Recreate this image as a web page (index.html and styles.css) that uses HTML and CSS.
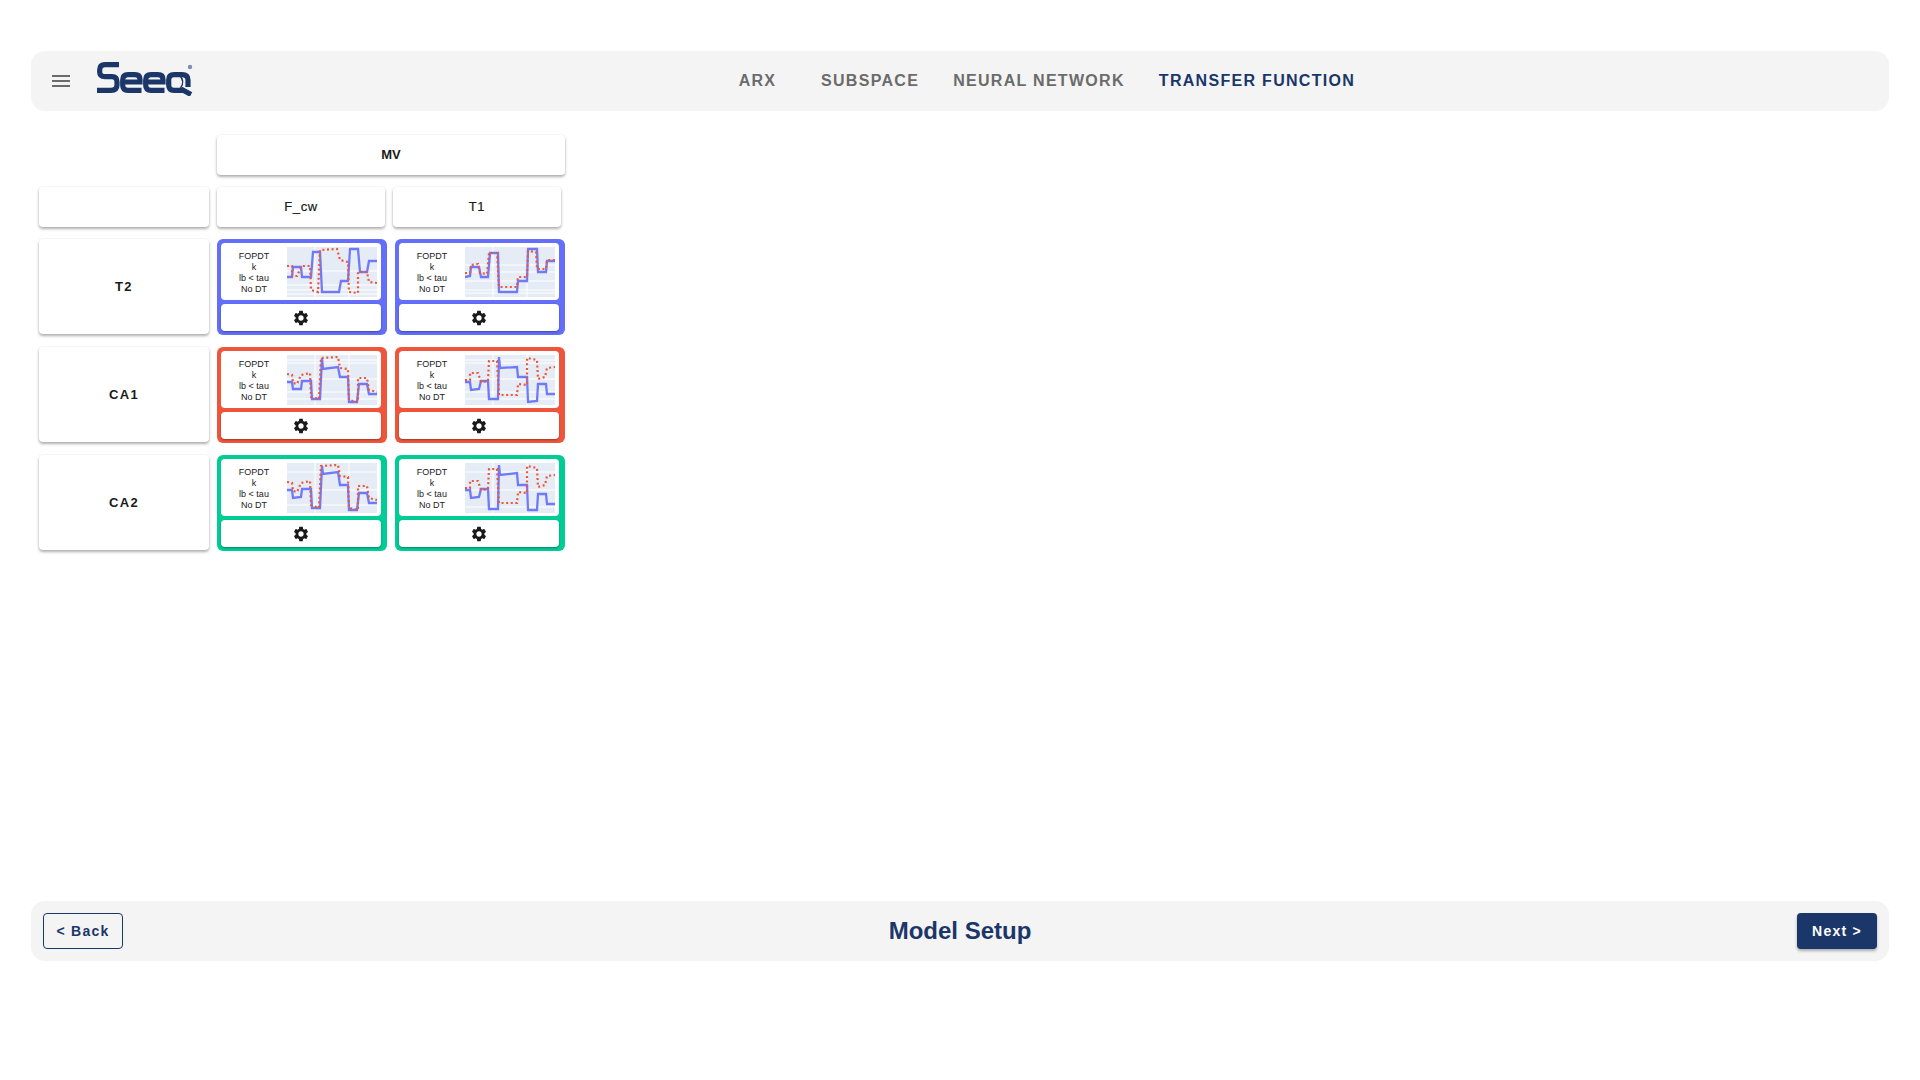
FILE: index.html
```html
<!DOCTYPE html>
<html lang="en">
<head>
<meta charset="utf-8">
<title>Model Setup</title>
<link rel="stylesheet" href="styles.css">
</head>
<body>
<svg class="defs" width="0" height="0" aria-hidden="true"><defs>
<symbol id="gear" viewBox="0 0 24 24"><path d="M19.14 12.94c.04-.3.06-.61.06-.94 0-.32-.02-.64-.07-.94l2.03-1.58c.18-.14.23-.41.12-.61l-1.92-3.32c-.12-.22-.37-.29-.59-.22l-2.39.96c-.5-.38-1.03-.7-1.62-.94l-.36-2.54c-.04-.24-.24-.41-.48-.41h-3.84c-.24 0-.43.17-.47.41l-.36 2.54c-.59.24-1.13.57-1.62.94l-2.39-.96c-.22-.08-.47 0-.59.22L2.74 8.87c-.12.21-.08.47.12.61l2.03 1.58c-.05.3-.09.63-.09.94s.02.64.07.94l-2.03 1.58c-.18.14-.23.41-.12.61l1.92 3.32c.12.22.37.29.59.22l2.39-.96c.5.38 1.03.7 1.62.94l.36 2.54c.05.24.24.41.48.41h3.84c.24 0 .44-.17.47-.41l.36-2.54c.59-.24 1.13-.56 1.62-.94l2.39.96c.22.08.47 0 .59-.22l1.92-3.32c.12-.22.07-.47-.12-.61l-2.01-1.58zM12 15.6c-1.98 0-3.6-1.62-3.6-3.6s1.62-3.6 3.6-3.6 3.6 1.62 3.6 3.6-1.62 3.6-3.6 3.6z"/></symbol>
</defs></svg>
<div class="page">
  <header class="bar top">
    <svg class="menu" viewBox="0 0 24 24"><path d="M3 18h18v-2H3v2zm0-5h18v-2H3v2zm0-7v2h18V6H3z"/></svg>
    <svg class="logo" viewBox="0 0 96 34">
      <g class="logo-s">
        <path d="M22 2.7H8Q2.7 2.7 2.7 8V10Q2.7 14.7 8 14.7H15Q20 14.7 20 20V23Q20 28.3 14 28.3H0"/>
        <path d="M25.7 20H43V17.5Q43 12.7 38 12.7H31Q25.7 12.7 25.7 18V23Q25.7 28.3 31 28.3H44.5"/>
        <path d="M48.7 20H66V17.5Q66 12.7 61 12.7H54Q48.7 12.7 48.7 18V23Q48.7 28.3 54 28.3H67.5"/>
        <path d="M86 28.3H77Q71.7 28.3 71.7 23V18Q71.7 12.7 77 12.7H85Q91 12.7 91 18V25"/>
        <path d="M84 27L94 32.5"/>
      </g>
      <path class="logo-c" d="M82 13Q89 19 83 27"/>
      <circle class="logo-r" cx="93" cy="5" r="2.2"/>
    </svg>
    <nav class="tabs">
      <span class="tab tab-arx">ARX</span>
      <span class="tab">SUBSPACE</span>
      <span class="tab">NEURAL NETWORK</span>
      <span class="tab active">TRANSFER FUNCTION</span>
    </nav>
  </header>

  <main class="main">
    <div class="matrix">
      <div class="blank"></div>
      <div class="card group">MV</div>

      <div class="card head">&nbsp;</div>
      <div class="card head narrow">F_cw</div>
      <div class="card head narrow shift">T1</div>

      <div class="card side">T2</div>
      <div class="cell blue">
        <div class="box info">
          <div class="desc">FOPDT<br>k<br>lb &lt; tau<br>No DT</div>
          <svg class="plot" viewBox="0 0 90 50"><rect class="plot-bg" width="90" height="50"/><path class="grid" d="M28 0V50M62 0V50M0 24H90M0 38H90M0 43H90M0 47H90"/><polyline class="ln-b" points="0,30 5,30 6,20 14,20 15,30 24,30 26,5 33,5 35,45 52,45 54,34 61,34 63,2 71,2 73,25 80,25 82,14 90,14"/><polyline class="ln-r" points="0,19 5,19 5,29 10,29 14,20 15,19 23,19 24,43 31,45 33,3 50,2 53,13 61,15 62,45 71,46 71,25 80,25 82,35 90,36"/></svg>
        </div>
        <div class="box tool"><svg class="gear"><use href="#gear"/></svg></div>
      </div>
      <div class="cell blue">
        <div class="box info">
          <div class="desc">FOPDT<br>k<br>lb &lt; tau<br>No DT</div>
          <svg class="plot" viewBox="0 0 90 50"><rect class="plot-bg" width="90" height="50"/><path class="grid" d="M28 0V50M62 0V50M0 18H90M0 25H90M0 34H90M0 43H90M0 46H90"/><polyline class="ln-b" points="0,30 5,29 6,20 14,20 16,30 23,30 25,6 33,6 34,45 52,45 53,34 62,34 63,2 72,2 73,25 81,25 82,14 90,14"/><polyline class="ln-r" points="0,26 5,26 6,18 13,17 15,26 22,27 24,6 32,6 34,40 52,40 53,30 62,30 63,4 71,5 72,22 81,22 82,13 90,13"/></svg>
        </div>
        <div class="box tool"><svg class="gear"><use href="#gear"/></svg></div>
      </div>

      <div class="card side">CA1</div>
      <div class="cell red">
        <div class="box info">
          <div class="desc">FOPDT<br>k<br>lb &lt; tau<br>No DT</div>
          <svg class="plot" viewBox="0 0 90 50"><rect class="plot-bg" width="90" height="50"/><path class="grid" d="M28 0V50M62 0V50M0 5H90M0 8H90M0 24H90M0 37H90M0 44H90"/><polyline class="ln-b" points="0,27 5,27 6,34 14,34 15,26 24,26 25,44 33,44 35,3 36,14 51,12 53,22 61,22 62,47 70,47 72,29 80,29 82,39 90,39"/><polyline class="ln-r" points="0,19 5,20 6,28 10,29 14,20 23,18 24,42 32,44 34,3 51,2 53,13 61,14 62,45 71,47 71,23 80,23 82,35 90,37"/></svg>
        </div>
        <div class="box tool"><svg class="gear"><use href="#gear"/></svg></div>
      </div>
      <div class="cell red">
        <div class="box info">
          <div class="desc">FOPDT<br>k<br>lb &lt; tau<br>No DT</div>
          <svg class="plot" viewBox="0 0 90 50"><rect class="plot-bg" width="90" height="50"/><path class="grid" d="M28 0V50M62 0V50M0 5H90M0 8H90M0 24H90M0 37H90M0 44H90"/><polyline class="ln-b" points="0,27 5,27 6,35 14,34 16,26 23,26 24,44 33,44 34,2 35,13 52,12 53,22 62,22 63,47 72,46 73,29 81,29 82,39 90,39"/><polyline class="ln-r" points="0,25 5,25 5,18 13,18 16,27 23,26 24,6 32,6 34,40 52,40 53,29 62,30 62,3 72,5 73,24 80,22 82,13 90,12"/></svg>
        </div>
        <div class="box tool"><svg class="gear"><use href="#gear"/></svg></div>
      </div>

      <div class="card side">CA2</div>
      <div class="cell green">
        <div class="box info">
          <div class="desc">FOPDT<br>k<br>lb &lt; tau<br>No DT</div>
          <svg class="plot" viewBox="0 0 90 50"><rect class="plot-bg" width="90" height="50"/><path class="grid" d="M28 0V50M62 0V50M0 9H90M0 27H90M0 42H90"/><polyline class="ln-b" points="0,27 5,27 6,35 14,34 15,26 24,26 25,45 33,45 35,3 36,11 51,9 53,22 61,22 62,47 70,47 72,30 80,30 82,40 90,40"/><polyline class="ln-r" points="0,19 5,20 6,28 10,29 14,20 23,18 24,42 32,45 34,3 51,2 53,13 61,14 62,45 71,47 71,23 80,23 82,35 90,37"/></svg>
        </div>
        <div class="box tool"><svg class="gear"><use href="#gear"/></svg></div>
      </div>
      <div class="cell green">
        <div class="box info">
          <div class="desc">FOPDT<br>k<br>lb &lt; tau<br>No DT</div>
          <svg class="plot" viewBox="0 0 90 50"><rect class="plot-bg" width="90" height="50"/><path class="grid" d="M28 0V50M62 0V50M0 9H90M0 27H90M0 44H90"/><polyline class="ln-b" points="0,27 5,27 6,35 14,34 16,26 23,26 24,46 33,46 34,2 35,12 52,10 53,22 62,22 63,47 72,47 73,31 81,31 82,41 90,41"/><polyline class="ln-r" points="0,25 5,25 5,18 13,18 16,27 23,26 24,6 32,6 34,40 52,40 53,29 62,30 62,3 72,5 73,24 80,22 82,13 90,12"/></svg>
        </div>
        <div class="box tool"><svg class="gear"><use href="#gear"/></svg></div>
      </div>
    </div>
  </main>

  <footer class="bar bottom">
    <button class="btn back">&lt; Back</button>
    <h1 class="title">Model Setup</h1>
    <button class="btn next">Next &gt;</button>
  </footer>
</div>
</body>
</html>
```
FILE: styles.css
```css
* { box-sizing: border-box; }
html, body { margin: 0; padding: 0; background: #fff; }
body { font-family: "Liberation Sans", Arial, sans-serif; color: #1a1a1a; }
.defs { position: absolute; }
.page { height: 1080px; padding: 51px 31px 0; overflow: hidden; }
.bar { background: #f4f4f4; border-radius: 14px; height: 60px; display: flex; align-items: center; }
.top { padding-left: 18px; }
.menu { width: 24px; height: 24px; fill: #6b6b6b; flex: none; }
.logo { width: 96px; height: 34px; margin-left: 24px; margin-top: -4px; flex: none; }
.logo-s path { fill: none; stroke: #1b3668; stroke-width: 5.2; }
.logo-c { fill: none; stroke: #1b3668; stroke-width: 1.4; }
.logo-r { fill: #7d8fb0; }
.tabs { display: flex; gap: 2px; margin-left: 519px; }
.tab { padding: 0 16px; font-size: 16px; font-weight: 700; letter-spacing: 1.3px; color: #6b6b6b; line-height: 58px; white-space: nowrap; }
.tab-arx { min-width: 91px; text-align: center; }
.tab.active { color: #1b3668; }
.main { height: 790px; padding: 24px 0 0 8px; }
.matrix { display: grid; grid-template-columns: 170px 170px 170px; grid-template-rows: 40px 40px 96px 96px 96px; column-gap: 8px; row-gap: 12px; }
.card { background: #fff; border-radius: 4px; box-shadow: 0 2px 3px rgba(0,0,0,.3), 0 0 3px rgba(0,0,0,.08); display: flex; align-items: center; justify-content: center; font-size: 13px; letter-spacing: .6px; padding-bottom: 1px; -webkit-text-stroke: .2px #1a1a1a; }
.group { grid-column: 2 / span 2; font-weight: 700; letter-spacing: 0; -webkit-text-stroke: 0; }
.narrow { width: 168px; }
.shift { margin-left: -2px; }
.side { height: 95px; font-weight: 700; letter-spacing: 1.3px; -webkit-text-stroke: 0; }
.cell { border-radius: 6px; padding: 4px 6px 4px 4px; display: flex; flex-direction: column; gap: 4px; }
.blue { background: #636efa; }
.red { background: #ef553b; }
.green { background: #00cc96; }
.box { background: #fff; border-radius: 4px; }
.info { height: 57px; display: flex; padding-top: 4px; }
.desc { width: 66px; font-size: 9px; line-height: 11px; text-align: center; padding-top: 4px; }
.plot { width: 90px; height: 50px; flex: none; }
.plot-bg { fill: #e5ecf6; }
.grid { stroke: #fff; stroke-width: 1; fill: none; }
.ln-b, .ln-r { fill: none; }
.ln-b { stroke: #636efa; stroke-width: 2.3; opacity: .9; }
.ln-r { stroke: #ef553b; stroke-width: 2.2; stroke-dasharray: 2 2.6; }
.tool { height: 27px; display: flex; align-items: center; justify-content: center; box-shadow: 0 1px 2px rgba(0,0,0,.35); }
.gear { width: 18px; height: 18px; fill: #1a1a1a; }
.bottom { justify-content: space-between; padding: 0 12px; }
.title { margin: 0; font-size: 24px; font-weight: 700; color: #1b3668; }
.btn { width: 80px; height: 36px; border-radius: 4px; font-family: "Liberation Sans", Arial, sans-serif; font-size: 14px; font-weight: 700; letter-spacing: 1.25px; padding: 0; }
.back { background: transparent; border: 1px solid #1b3668; color: #1b3668; }
.next { background: #1b3668; border: 0; color: #fff; box-shadow: 0 2px 3px rgba(0,0,0,.3); }
```
